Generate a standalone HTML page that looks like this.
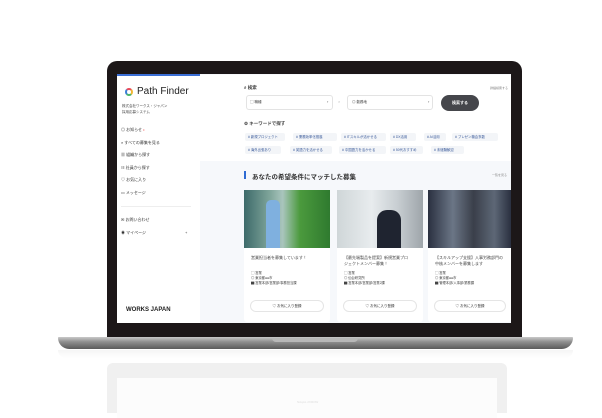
<!DOCTYPE html>
<html><head><meta charset="utf-8"><style>
*{margin:0;padding:0;box-sizing:border-box}
body{width:602px;height:408px;background:#fff;position:relative;overflow:hidden;font-family:"Liberation Sans","Noto Sans CJK JP",sans-serif;color:#333}
.a{position:absolute}
.t{position:absolute;white-space:nowrap;font-size:4px;color:#444}
.tag{position:absolute;height:8px;background:#f3f5f8;border-radius:2px;font-size:3.4px;color:#3a5a9a;line-height:8px;padding:0 3px;white-space:nowrap;overflow:hidden}
.sel{position:absolute;height:15px;background:#fff;border:1px solid #e3e3e3;border-radius:3px}
.card{position:absolute;top:190px;height:132px;background:#fff;border-radius:3px}
.img{position:absolute;left:0;top:0;right:0;height:58px}
.mi{position:absolute;left:121px;font-size:4px;color:#333;white-space:nowrap}
</style></head><body>
<!-- reflection -->
<div class="a" style="left:58px;top:350px;width:515px;height:8px;background:linear-gradient(#f5f5f5,#fff);border-radius:0 0 40px 40px"></div>
<div class="a" style="left:107px;top:363px;width:400px;height:50px;background:#f0f0f0;border-radius:6px 6px 0 0"></div>
<div class="a" style="left:117px;top:378px;width:380px;height:40px;background:#fcfcfc"></div>
<div class="t" style="left:297px;top:400px;color:#ddd;font-size:3px">NAqAL 2XЯOW</div>
<!-- bezel -->
<div class="a" style="left:107px;top:61px;width:415px;height:278px;background:#1c1718;border-radius:10px 10px 2px 2px"></div>
<!-- base -->
<div class="a" style="left:58px;top:337px;width:515px;height:12px;background:linear-gradient(#c9c9c9,#8f8f8f 40%,#5a5a5a);border-radius:3px 3px 40px 40px"></div>
<div class="a" style="left:272px;top:338px;width:86px;height:4px;background:#b8b8b8;border-radius:0 0 4px 4px"></div>
<!-- screen -->
<div class="a" style="left:117px;top:74px;width:394px;height:249px;background:#f6f8fb;overflow:hidden"></div>
<div class="a" style="left:117px;top:74px;width:83px;height:249px;background:#fff"></div>
<div class="a" style="left:117px;top:74px;width:83px;height:2px;background:#3b6fd6"></div>
<div class="a" style="left:200px;top:75px;width:311px;height:86px;background:#fff"></div>
<!-- sidebar -->
<div class="a" style="left:125px;top:88px;width:8px;height:8px;border-radius:50%;border:2.5px solid;border-color:#e94a5a #f2b732 #4bb667 #3b7fd6"></div>
<div class="t" style="left:137px;top:86px;font-size:10px;color:#222">Path Finder</div>
<div class="t" style="left:122px;top:104px;font-size:3.5px">株式会社ワークス・ジャパン</div>
<div class="t" style="left:122px;top:110px;font-size:3.5px">採用応募システム</div>
<div class="mi" style="top:127px">◎ お知らせ <span style="color:#e33">•</span></div>
<div class="mi" style="top:140px">⌕ すべての募集を見る</div>
<div class="mi" style="top:152px">▦ 組織から探す</div>
<div class="mi" style="top:165px">☷ 社員から探す</div>
<div class="mi" style="top:177px">♡ お気に入り</div>
<div class="mi" style="top:190px">▭ メッセージ</div>
<div class="a" style="left:121px;top:206px;width:70px;height:1px;background:#eee"></div>
<div class="mi" style="top:217px">✉ お問い合わせ</div>
<div class="mi" style="top:230px">◉ マイページ</div>
<div class="t" style="left:185px;top:230px">+</div>
<div class="t" style="left:126px;top:307px;font-size:6px;font-weight:bold;color:#222">WORKS JAPAN</div>
<!-- search -->
<div class="t" style="left:244px;top:85px;font-size:4.5px;font-weight:bold">⌕ 検索</div>
<div class="t" style="left:490px;top:86px;font-size:3px;color:#888">詳細検索する</div>
<div class="sel" style="left:246px;top:95px;width:87px"></div>
<div class="t" style="left:250px;top:100px;font-size:3.5px">▢ 職種</div>
<div class="t" style="left:327px;top:99px">›</div>
<div class="t" style="left:338px;top:99px;color:#bbb">×</div>
<div class="sel" style="left:347px;top:95px;width:86px"></div>
<div class="t" style="left:352px;top:100px;font-size:3.5px">◎ 勤務地</div>
<div class="t" style="left:428px;top:99px">›</div>
<div class="a" style="left:441px;top:95px;width:38px;height:16px;background:#45464b;border-radius:8px;color:#fff;font-size:4px;text-align:center;line-height:16px;font-weight:bold">検索する</div>
<div class="t" style="left:244px;top:121px;font-size:4.5px;font-weight:bold">⚙ キーワードで探す</div>
<div class="tag" style="left:245px;top:133px;width:40px"># 新規プロジェクト</div>
<div class="tag" style="left:293px;top:133px;width:44px"># 業務効率化推進</div>
<div class="tag" style="left:341px;top:133px;width:45px"># ITスキルが活かせる</div>
<div class="tag" style="left:390px;top:133px;width:26px"># DX活用</div>
<div class="tag" style="left:424px;top:133px;width:22px"># AI活用</div>
<div class="tag" style="left:452px;top:133px;width:46px"># プレゼン機会多数</div>
<div class="tag" style="left:245px;top:146px;width:36px"># 海外出張あり</div>
<div class="tag" style="left:290px;top:146px;width:42px"># 英語力を活かせる</div>
<div class="tag" style="left:339px;top:146px;width:47px"># 中国語力を活かせる</div>
<div class="tag" style="left:390px;top:146px;width:33px"># 50代おすすめ</div>
<div class="tag" style="left:431px;top:146px;width:33px"># 未経験歓迎</div>
<!-- section -->
<div class="a" style="left:244px;top:171px;width:1.5px;height:8px;background:#2f6bd3"></div>
<div class="t" style="left:252px;top:171px;font-size:6.5px;font-weight:bold;color:#333">あなたの希望条件にマッチした募集</div>
<div class="t" style="left:492px;top:173px;font-size:3px;color:#888">一覧を見る</div>
<!-- cards -->
<div class="card" style="left:244px;width:86px"><div class="img" style="background:linear-gradient(90deg,#3d6a6a,#7fa59a 30%,#a9c5bd 45%,#4b9a3d 65%,#2f7a2f)"></div>
<div class="a" style="left:22px;top:10px;width:14px;height:48px;background:#7fb0df;border-radius:5px 5px 0 0"></div></div>
<div class="card" style="left:337px;width:86px"><div class="img" style="background:linear-gradient(90deg,#cfd6d8,#e8ecee 40%,#c8ced2 70%,#9ea5aa)"></div>
<div class="a" style="left:40px;top:20px;width:24px;height:38px;background:#1f2430;border-radius:10px 10px 0 0"></div></div>
<div class="card" style="left:428px;width:83px"><div class="img" style="background:linear-gradient(90deg,#2a3040,#6b7686 30%,#3a3f4a 55%,#5d6776 80%,#2a3040)"></div></div>
<div class="t" style="left:251px;top:255px">営業担当者を募集しています！</div>
<div class="t" style="left:344px;top:255px">【最先端製品を提案】新規営業プロ</div>
<div class="t" style="left:344px;top:261px">ジェクトメンバー募集！</div>
<div class="t" style="left:435px;top:255px">【スキルアップ支援】人事労務部門の</div>
<div class="t" style="left:435px;top:261px">中核メンバーを募集します</div>
<div class="t" style="left:251px;top:270px;font-size:3.3px">▢ 営業<br>◎ 東京都●●市<br>▇ 営業本部/営業部/事務担当課</div>
<div class="t" style="left:344px;top:270px;font-size:3.3px">▢ 営業<br>◎ 仙台研究所<br>▇ 営業本部/営業部/営業2課</div>
<div class="t" style="left:435px;top:270px;font-size:3.3px">▢ 営業<br>◎ 東京都●●市<br>▇ 管理本部/人事部/業務課</div>
<div class="a" style="left:250px;top:300px;width:74px;height:12px;background:#fff;border:1px solid #e5e5e5;border-radius:6px;font-size:3.5px;text-align:center;line-height:10px">♡ お気に入り登録</div>
<div class="a" style="left:343px;top:300px;width:74px;height:12px;background:#fff;border:1px solid #e5e5e5;border-radius:6px;font-size:3.5px;text-align:center;line-height:10px">♡ お気に入り登録</div>
<div class="a" style="left:434px;top:300px;width:72px;height:12px;background:#fff;border:1px solid #e5e5e5;border-radius:6px;font-size:3.5px;text-align:center;line-height:10px">♡ お気に入り登録</div>
</body></html>
